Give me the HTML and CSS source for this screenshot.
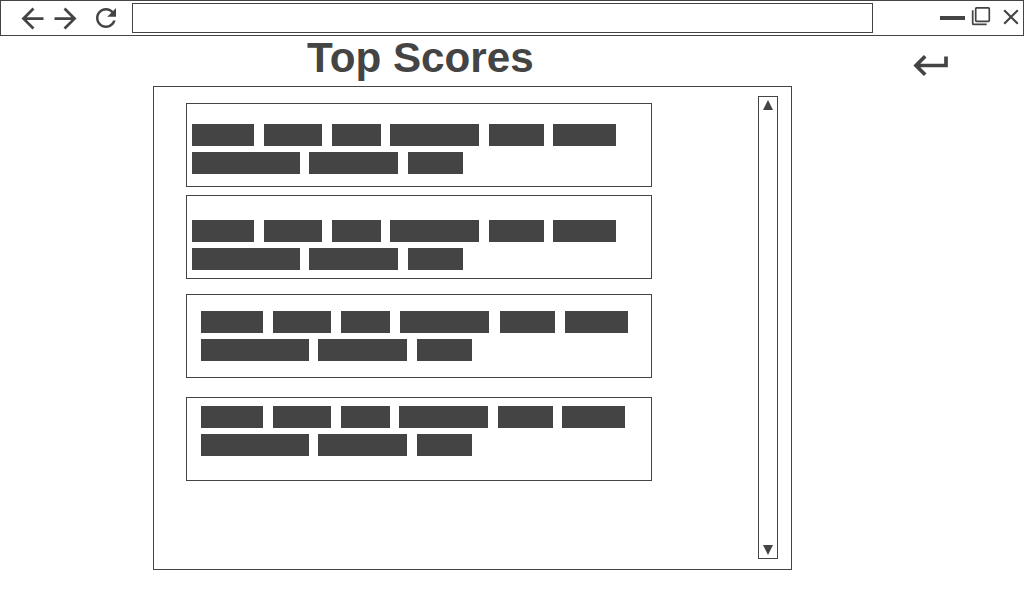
FILE: index.html
```html
<!DOCTYPE html>
<html lang="en">
<head>
<meta charset="utf-8">
<title>Top Scores</title>
<link rel="stylesheet" href="styles.css">
</head>
<body>
<header class="toolbar">
  <svg class="icon back" viewBox="0 0 24 24"><path d="M20 11H7.83l5.59-5.59L12 4l-8 8 8 8 1.41-1.41L7.83 13H20z"/></svg>
  <svg class="icon forward" viewBox="0 0 24 24"><path d="M4 11h12.17l-5.59-5.59L12 4l8 8-8 8-1.41-1.41L16.17 13H4z"/></svg>
  <svg class="icon reload" viewBox="0 0 24 24"><path d="M17.65 6.35C16.2 4.9 14.21 4 12 4c-4.42 0-7.99 3.58-7.99 8s3.57 8 7.99 8c3.73 0 6.84-2.55 7.73-6h-2.08c-.82 2.33-3.04 4-5.65 4-3.31 0-6-2.69-6-6s2.69-6 6-6c1.66 0 3.14.69 4.22 1.78L13 11h7V4z"/></svg>
  <div class="address"></div>
  <div class="window-controls">
    <span class="minimize"></span>
    <svg class="restore" viewBox="0 0 20 20"><rect x="4.7" y="1.8" width="13.6" height="13.6" rx=".8"/><path d="M1.7 4.3v13.1q0 1 1 1h13"/></svg>
    <svg class="close" viewBox="0 0 16 16"><path d="M1.2 1.2l13.6 13.6M14.8 1.2L1.2 14.8"/></svg>
  </div>
</header>
<div class="heading">
  <h1 class="title">Top Scores</h1>
  <svg class="return" viewBox="0 0 36 24"><path d="M33 2.5v9H3M12.2 2.3L3 11.5l9.2 9.2"/></svg>
</div>
<main class="panel">
  <div class="scores">
    <section class="score first">
      <div class="line"><i class="word a"></i><i class="word b"></i><i class="word c"></i><i class="word d"></i><i class="word e"></i><i class="word f"></i></div>
      <div class="line"><i class="word g"></i><i class="word h"></i><i class="word i"></i></div>
    </section>
    <section class="score second">
      <div class="line"><i class="word a"></i><i class="word b"></i><i class="word c"></i><i class="word d"></i><i class="word e"></i><i class="word f"></i></div>
      <div class="line"><i class="word g"></i><i class="word h"></i><i class="word i"></i></div>
    </section>
    <section class="score third">
      <div class="line"><i class="word a"></i><i class="word b"></i><i class="word c"></i><i class="word d"></i><i class="word e"></i><i class="word f"></i></div>
      <div class="line"><i class="word g"></i><i class="word h"></i><i class="word i"></i></div>
    </section>
    <section class="score fourth">
      <div class="line"><i class="word a"></i><i class="word b"></i><i class="word c"></i><i class="word d"></i><i class="word e"></i><i class="word f"></i></div>
      <div class="line"><i class="word g"></i><i class="word h"></i><i class="word i"></i></div>
    </section>
  </div>
  <div class="scrollbar">
    <svg class="arrow" viewBox="0 0 10 10"><path d="M5 0l5 10H0z"/></svg>
    <svg class="arrow" viewBox="0 0 10 10"><path d="M0 0h10L5 10z"/></svg>
  </div>
</main>
</body>
</html>
```
FILE: styles.css
```css
* { box-sizing: border-box; }
body {
  margin: 0;
  height: 600px;
  overflow: hidden;
  background: #fff;
  color: #444;
  font-family: "Liberation Sans", Arial, sans-serif;
}
svg { display: block; flex: none; }
.toolbar {
  display: flex;
  align-items: flex-start;
  height: 36px;
  border: 1px solid #444;
}
.icon { fill: #444; }
.back { width: 33px; height: 33px; margin: 1px 0 0 15px; }
.forward { width: 33px; height: 33px; margin-top: 1px; }
.reload { width: 30px; height: 30px; margin: 2px 0 0 9px; }
.address {
  width: 741px;
  height: 30px;
  margin: 2px 0 0 11px;
  border: 1px solid #444;
}
.window-controls { display: flex; align-items: flex-start; margin-left: 67px; }
.minimize { width: 25px; height: 4px; margin-top: 15px; background: #444; }
.restore {
  width: 20px;
  height: 20px;
  margin: 5px 0 0 6px;
  fill: none;
  stroke: #444;
  stroke-width: 1.7;
}
.close {
  width: 16px;
  height: 16px;
  margin: 7.5px 0 0 11.5px;
  fill: none;
  stroke: #444;
  stroke-width: 2.2;
}
.heading { display: flex; height: 50px; padding-left: 307px; }
.title {
  width: 606px;
  margin: 0;
  font-size: 42.2px;
  line-height: 44px;
  white-space: nowrap;
}
.return {
  width: 36px;
  height: 24px;
  margin-top: 18px;
  fill: none;
  stroke: #444;
  stroke-width: 3.7;
}
.panel {
  display: flex;
  width: 639px;
  height: 484px;
  margin-left: 153px;
  padding: 9px 13px 10px 32px;
  border: 1px solid #444;
}
.scores { width: 466px; padding-top: 7px; }
.score {
  display: flex;
  flex-direction: column;
  gap: 6px;
  height: 84px;
  border: 1px solid #444;
}
.first { padding: 20px 0 0 5px; }
.second { margin-top: 8px; padding: 24px 0 0 5px; }
.third { margin-top: 15px; padding: 16px 0 0 14px; }
.fourth { margin-top: 19px; padding: 8px 0 0 14px; }
.line { display: flex; }
.word { flex: none; height: 22px; background: #444; }
.a { width: 62px; }
.b { width: 58px; margin-left: 10px; }
.c { width: 49px; margin-left: 10px; }
.d { width: 89px; margin-left: 9px; }
.e { width: 55px; margin-left: 10px; }
.f { width: 63px; margin-left: 9px; }
.g { width: 108px; }
.h { width: 89px; margin-left: 9px; }
.i { width: 55px; margin-left: 10px; }
.third .d, .third .f { margin-left: 10px; }
.third .e { margin-left: 11px; }
.scrollbar {
  display: flex;
  flex-direction: column;
  justify-content: space-between;
  align-items: center;
  width: 20px;
  height: 463px;
  margin-left: 106px;
  padding: 3px 0;
  border: 1px solid #444;
}
.arrow { width: 10px; height: 10px; fill: #444; }
```
